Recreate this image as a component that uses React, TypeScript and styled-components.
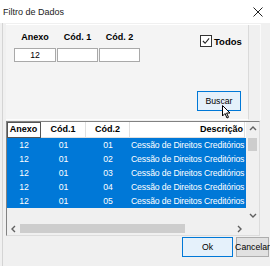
import styled, { createGlobalStyle } from "styled-components";

const GlobalStyle = createGlobalStyle`
  html, body {
    margin: 0;
    padding: 0;
    background: #f0f0f0;
    overflow: hidden;
  }
  body {
    font-family: "Liberation Sans", Arial, sans-serif;
    font-size: 8.7px;
    color: #000;
  }
`;

const Window = styled.div`
  width: 270px;
  height: 266px;
  display: flex;
  flex-direction: column;
  position: relative;
  overflow: hidden;
`;

const TitleBar = styled.div`
  height: 23px;
  background: #fff;
  display: flex;
  align-items: center;
  justify-content: space-between;
  padding-left: 3px;
  font-size: 9px;
  color: #222;
`;

const CloseBox = styled.div`
  width: 24px;
  height: 23px;
  display: flex;
  align-items: center;
  justify-content: center;
`;

const Body = styled.div`
  flex: 1;
  margin-left: 2px;
  border-left: 1px solid #d4d4d4;
  display: flex;
  flex-direction: column;
  padding-left: 3px;
`;

const TopPanel = styled.div`
  margin-top: 1px;
  width: 254px;
  height: 95px;
  border-top: 1px solid #fff;
  border-right: 1px solid #fafafa;
  display: flex;
`;

const FilterBox = styled.div`
  width: 242px;
  background: #f4f4f4;
  border-right: 1px solid #dadada;
  border-bottom: 1px solid #fdfdfd;
  display: flex;
  justify-content: space-between;
`;

const Codes = styled.div`
  padding: 3px 0 0 8px;
  display: grid;
  grid-template-columns: 42px 41px 41px;
  grid-template-rows: 20px 14px;
  column-gap: 1px;
  align-content: start;
`;

const CodeLabel = styled.div`
  font-weight: 700;
  text-align: center;
  line-height: 18px;
  font-size: 9px;
`;

const CodeCell = styled.div`
  background: #fff;
  border: 1px solid #a9a9a9;
  text-align: center;
  line-height: 12px;
`;

const Side = styled.div`
  width: 50px;
  padding: 10px 1px 8px 0;
  display: flex;
  flex-direction: column;
  justify-content: space-between;
  align-items: flex-start;
  position: relative;
`;

const CheckRow = styled.label`
  display: flex;
  align-items: center;
  gap: 2px;
  padding-left: 3px;
  font-weight: 700;
  font-size: 9.5px;
`;

const CheckBox = styled.span`
  width: 10px;
  height: 10px;
  border: 1px solid #333;
  background: #fff;
  display: flex;
  align-items: center;
  justify-content: center;
`;

const Button = styled.button<{ primary?: boolean; width: number }>`
  width: ${(p) => p.width}px;
  height: 20px;
  padding: 0;
  font-family: inherit;
  font-size: 8.7px;
  color: #000;
  white-space: nowrap;
  overflow: visible;
  display: flex;
  align-items: center;
  justify-content: center;
  background: ${(p) => (p.primary ? "#e5f1fb" : "#e1e1e1")};
  border: 1px solid ${(p) => (p.primary ? "#0078d7" : "#adadad")};
`;

const Cursor = styled.svg`
  position: absolute;
  left: 25px;
  top: 80px;
`;

const Grid = styled.div`
  margin-top: 1px;
  width: 254px;
  height: 115px;
  border: 1px solid #828282;
  border-right-color: #dcdcdc;
  border-bottom-color: #dcdcdc;
  display: grid;
  grid-template-columns: 1fr 13px;
  grid-template-rows: 1fr 13px;
  background: #f0f0f0;
  box-sizing: border-box;
`;

const Table = styled.div`
  overflow: hidden;
  display: flex;
  flex-direction: column;
`;

const Row = styled.div`
  display: grid;
  grid-template-columns: 34px 45px 44px 115px;
  height: 14px;
  background: #0078d7;
  color: #fff;
  line-height: 14px;
  white-space: nowrap;
`;

const HeadRow = styled(Row)`
  height: 16px;
  line-height: 15px;
  background: #fff;
  color: #000;
  font-weight: 700;
  font-size: 9px;
`;

const HeadCell = styled.div<{ right?: boolean; focus?: boolean }>`
  text-align: ${(p) => (p.right ? "right" : "center")};
  padding-right: ${(p) => (p.right ? "1px" : "0")};
  border-right: 1px solid #e0e0e0;
  border-bottom: 1px solid #e0e0e0;
  outline: ${(p) => (p.focus ? "1px solid #555" : "none")};
  outline-offset: -1px;
  overflow: hidden;
`;

const Cell = styled.div<{ left?: boolean }>`
  text-align: ${(p) => (p.left ? "left" : "center")};
  padding-left: ${(p) => (p.left ? "1px" : "0")};
  letter-spacing: ${(p) => (p.left ? "-0.15px" : "0")};
  overflow: hidden;
`;

const VScroll = styled.div`
  display: flex;
  flex-direction: column;
  align-items: center;
  background: #f0f0f0;
`;

const HScroll = styled.div`
  display: flex;
  align-items: center;
  background: #f0f0f0;
`;

const ArrowBox = styled.div`
  width: 13px;
  height: 13px;
  display: flex;
  align-items: center;
  justify-content: center;
  flex-shrink: 0;
`;

const VThumb = styled.div`
  width: 9px;
  height: 13px;
  margin-top: 3px;
  background: #cdcdcd;
`;

const HThumb = styled.div`
  width: 165px;
  height: 9px;
  background: #cdcdcd;
`;

const Spacer = styled.div`
  flex: 1;
`;

const Footer = styled.div`
  display: flex;
  gap: 3px;
  padding: 1px 0 0 176px;
`;

const Chevron = ({ dir }: { dir: "up" | "down" | "left" | "right" }) => {
  const d = {
    up: "M1 5 L4 2 L7 5",
    down: "M1 2 L4 5 L7 2",
    left: "M5 1 L2 4 L5 7",
    right: "M2 1 L5 4 L2 7",
  }[dir];
  return (
    <svg width="8" height="8" viewBox="0 0 8 8">
      <path d={d} fill="none" stroke="#606060" strokeWidth="1.4" />
    </svg>
  );
};

const rows = ["01", "02", "03", "04", "05"];

export default function App() {
  return (
    <>
      <GlobalStyle />
      <Window>
        <TitleBar>
          <span>Filtro de Dados</span>
          <CloseBox>
            <svg width="10" height="10" viewBox="0 0 10 10">
              <path d="M0.5 0.5 L9.5 9.5 M9.5 0.5 L0.5 9.5" stroke="#222" strokeWidth="1" />
            </svg>
          </CloseBox>
        </TitleBar>
        <Body>
          <TopPanel>
            <FilterBox>
              <Codes>
                <CodeLabel>Anexo</CodeLabel>
                <CodeLabel>Cód. 1</CodeLabel>
                <CodeLabel>Cód. 2</CodeLabel>
                <CodeCell>12</CodeCell>
                <CodeCell />
                <CodeCell />
              </Codes>
              <Side>
                <CheckRow>
                  <CheckBox>
                    <svg width="8" height="8" viewBox="0 0 9 9">
                      <path d="M1 4.5 L3.5 7 L8 1.5" fill="none" stroke="#222" strokeWidth="1.2" />
                    </svg>
                  </CheckBox>
                  Todos
                </CheckRow>
                <Button primary width={44}>Buscar</Button>
                <Cursor width="10" height="15" viewBox="0 0 10 15">
                  <path d="M0.5 0.5 L0.5 11 L3 8.5 L5 13 L6.5 12.3 L4.6 8 L8 8 Z" fill="#fff" stroke="#000" strokeWidth="1" />
                </Cursor>
              </Side>
            </FilterBox>
          </TopPanel>
          <Grid>
            <Table>
              <HeadRow>
                <HeadCell focus>Anexo</HeadCell>
                <HeadCell>Cód.1</HeadCell>
                <HeadCell>Cód.2</HeadCell>
                <HeadCell right>Descrição</HeadCell>
              </HeadRow>
              {rows.map((c) => (
                <Row key={c}>
                  <Cell>12</Cell>
                  <Cell>01</Cell>
                  <Cell>{c}</Cell>
                  <Cell left>Cessão de Direitos Creditórios</Cell>
                </Row>
              ))}
            </Table>
            <VScroll>
              <ArrowBox>
                <Chevron dir="up" />
              </ArrowBox>
              <VThumb />
              <Spacer />
              <ArrowBox>
                <Chevron dir="down" />
              </ArrowBox>
            </VScroll>
            <HScroll>
              <ArrowBox>
                <Chevron dir="left" />
              </ArrowBox>
              <HThumb />
              <Spacer />
              <ArrowBox>
                <Chevron dir="right" />
              </ArrowBox>
            </HScroll>
            <div />
          </Grid>
          <Footer>
            <Button primary width={51}>Ok</Button>
            <Button width={33}>Cancelar</Button>
          </Footer>
        </Body>
      </Window>
    </>
  );
}
